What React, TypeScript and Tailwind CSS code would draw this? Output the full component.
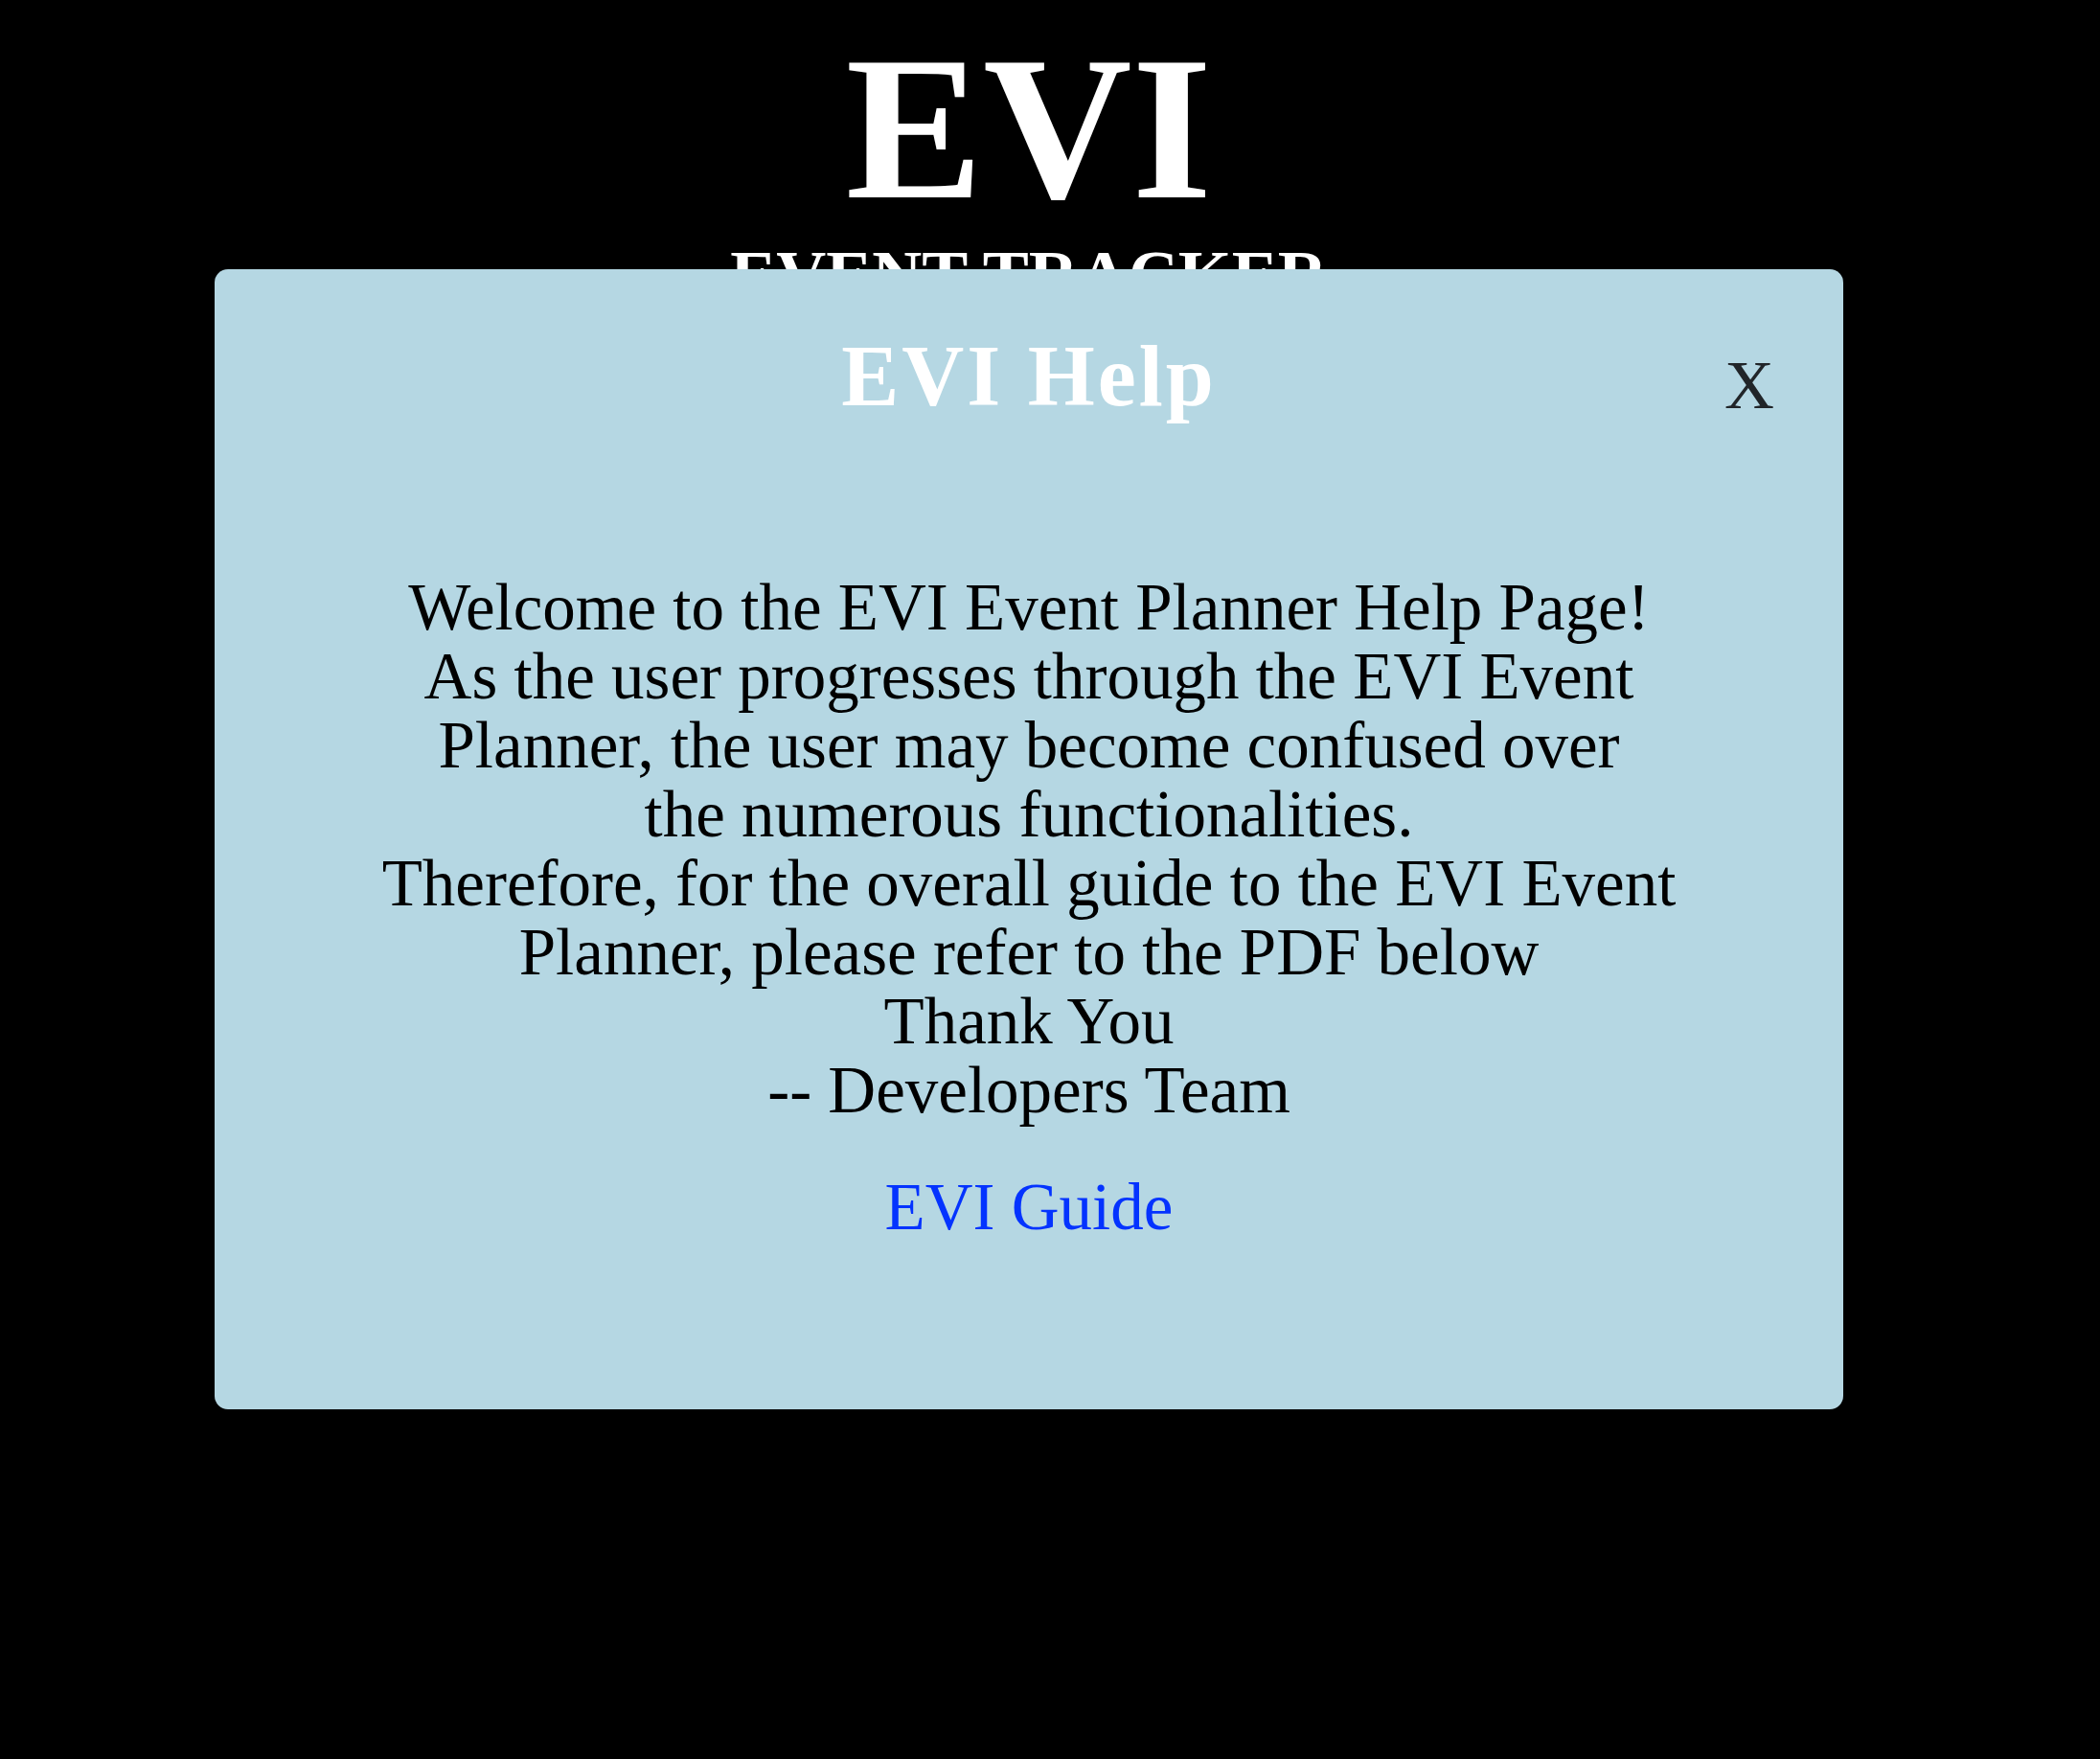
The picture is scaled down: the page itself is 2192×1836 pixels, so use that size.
const serif = 'font-["Liberation_Serif","Times_New_Roman",serif]'

const LINES = [
  'Welcome to the EVI Event Planner Help Page!',
  'As the user progresses through the EVI Event',
  'Planner, the user may become confused over',
  'the numerous functionalities.',
  'Therefore, for the overall guide to the EVI Event',
  'Planner, please refer to the PDF below',
  'Thank You',
  '-- Developers Team',
]

function HelpModal() {
  return (
    <div className="absolute left-[224px] top-[281px] h-[1190px] w-[1700px] rounded-[14px] bg-[#b5d7e3]">
      <div className="grid grid-cols-[1fr_auto_1fr] px-[72px] pt-[67px]">
        <div />
        <h2 className="text-[90px] font-bold leading-none tracking-[3px] text-white">
          EVI Help
        </h2>
        <button
          type="button"
          className="mt-[17px] justify-self-end text-[72px] leading-none text-[#212529]"
        >
          X
        </button>
      </div>

      <p className="mt-[160px] text-center text-[69px] leading-[72px] text-black">
        {LINES.map((line, i) => (
          <span key={i}>
            {line}
            {i < LINES.length - 1 && <br />}
          </span>
        ))}
      </p>

      <div className="mt-[50px] text-center">
        <a href="#" className="text-[69px] leading-[72px] text-[#0433ff] no-underline">
          EVI Guide
        </a>
      </div>
    </div>
  )
}

export default function App() {
  return (
    <div className={`relative min-h-screen w-full bg-black ${serif}`}>
      <div className="w-[2148px] text-center text-white">
        <h1 className="pt-[26px] text-[215px] font-bold leading-none">EVI</h1>
        <div className="mt-[10px] text-[72px] font-bold leading-none">EVENT TRACKER</div>
      </div>
      <HelpModal />
    </div>
  )
}
